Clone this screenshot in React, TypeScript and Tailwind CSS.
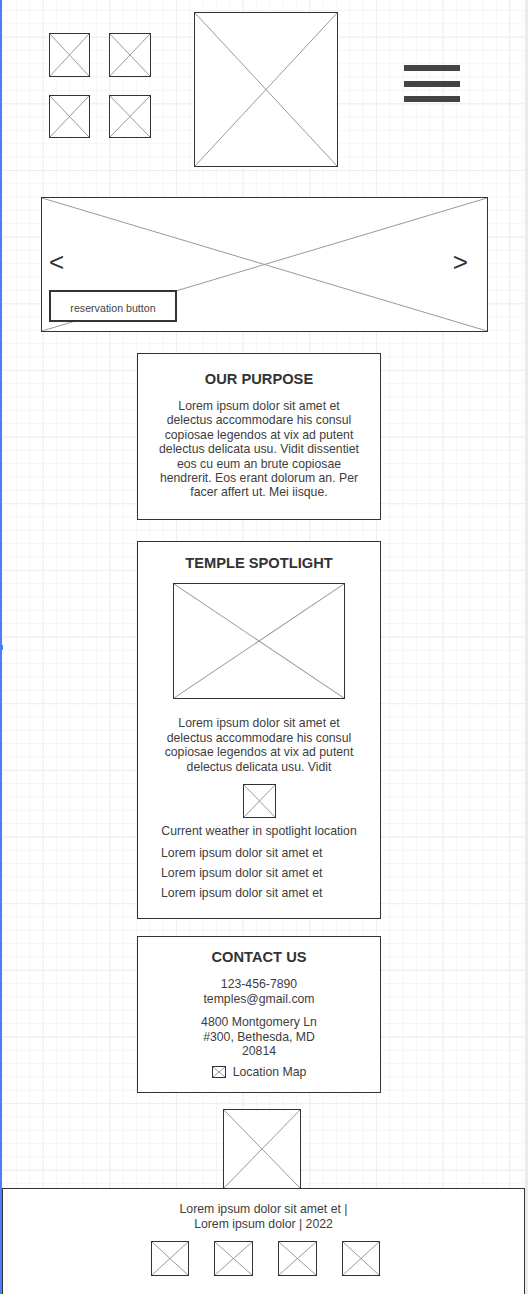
import type { ReactNode } from "react";

// wireframe placeholder: bordered box with a cross
function Placeholder({ className = "", children }: { className?: string; children?: ReactNode }) {
  return (
    <div className={`relative shrink-0 border border-[#333] bg-white ${className}`}>
      <svg
        className="absolute inset-0 h-full w-full"
        viewBox="0 0 100 100"
        preserveAspectRatio="none"
      >
        <line x1="0" y1="0" x2="100" y2="100" stroke="#999" strokeWidth="1" vectorEffect="non-scaling-stroke" />
        <line x1="0" y1="100" x2="100" y2="0" stroke="#999" strokeWidth="1" vectorEffect="non-scaling-stroke" />
      </svg>
      {children}
    </div>
  );
}

const PURPOSE = [
  "Lorem ipsum dolor sit amet et",
  "delectus accommodare his consul",
  "copiosae legendos at vix ad putent",
  "delectus delicata usu. Vidit dissentiet",
  "eos cu eum an brute copiosae",
  "hendrerit. Eos erant dolorum an. Per",
  "facer affert ut. Mei iisque.",
];

const SPOTLIGHT = [
  "Lorem ipsum dolor sit amet et",
  "delectus accommodare his consul",
  "copiosae legendos at vix ad putent",
  "delectus delicata usu. Vidit",
];

export default function App() {
  return (
    <div className="relative h-[1294px] overflow-hidden border-l-2 border-r-[3px] border-l-[#4a80f5] border-r-[#ebebeb] bg-white bg-[linear-gradient(to_right,#eeeeee_1px,transparent_1px),linear-gradient(to_bottom,#eeeeee_1px,transparent_1px),linear-gradient(to_right,#f5f5f5_1px,transparent_1px),linear-gradient(to_bottom,#f5f5f5_1px,transparent_1px)] bg-[size:66.667px_66.667px,66.667px_66.667px,13.333px_13.333px,13.333px_13.333px] bg-[position:40.7px_0,0_36.7px,0.7px_10px,0.7px_10px] font-['Liberation_Sans',Arial,sans-serif] text-[#333]">
      {/* selection handle on the left edge */}
      <div className="absolute left-[-2px] top-[645px] h-[5px] w-[3px] border border-[#4a80f5] bg-white" />

      {/* header */}
      <header className="flex items-start pl-[47px] pt-[12px]">
        <div className="mt-[21px] grid grid-cols-[41px_42px] gap-x-[19px] gap-y-[18px]">
          <Placeholder className="h-[44px] w-[41px]" />
          <Placeholder className="h-[44px] w-[42px]" />
          <Placeholder className="h-[43px] w-[41px]" />
          <Placeholder className="h-[43px] w-[42px]" />
        </div>
        <Placeholder className="ml-[43px] h-[155px] w-[144px]" />
        <div className="ml-[66px] mt-[53px] flex flex-col gap-[9.5px]">
          <span className="h-[6px] w-[56px] bg-[#444]" />
          <span className="h-[6px] w-[56px] bg-[#444]" />
          <span className="h-[6px] w-[56px] bg-[#444]" />
        </div>
      </header>

      {/* carousel */}
      <Placeholder className="ml-[39px] mt-[30px] h-[135px] w-[447px]">
        <span className="absolute left-[7px] top-[49px] text-[26px] leading-[30px] text-[#333]">&lt;</span>
        <span className="absolute right-[19px] top-[49px] text-[26px] leading-[30px] text-[#333]">&gt;</span>
        <button className="absolute left-[7px] top-[92px] flex h-[32px] w-[128px] items-center justify-center border-2 border-[#333] bg-white pt-[3px] text-[10.67px] text-[#444]">
          reservation button
        </button>
      </Placeholder>

      {/* our purpose */}
      <section className="ml-[135px] mt-[21px] flex h-[167px] w-[244px] flex-col items-center border border-[#333] bg-white pt-[17px]">
        <h2 className="text-[14.67px] font-bold leading-[17px]">OUR PURPOSE</h2>
        <p className="mt-[11px] text-center text-[12.25px] leading-[14.4px] text-[#3d3d3d]">
          {PURPOSE.map((l) => (
            <span key={l} className="block">{l}</span>
          ))}
        </p>
      </section>

      {/* temple spotlight */}
      <section className="ml-[135px] mt-[21px] flex h-[378px] w-[244px] flex-col items-center border border-[#333] bg-white pt-[13px]">
        <h2 className="text-[14.67px] font-bold leading-[17px]">TEMPLE SPOTLIGHT</h2>
        <Placeholder className="mt-[11px] h-[116px] w-[172px]" />
        <p className="mt-[17px] text-center text-[12.25px] leading-[14.67px] text-[#3d3d3d]">
          {SPOTLIGHT.map((l) => (
            <span key={l} className="block">{l}</span>
          ))}
        </p>
        <Placeholder className="mt-[9px] h-[34px] w-[33px]" />
        <p className="mt-[6px] text-[12.25px] leading-[14.67px] text-[#3d3d3d]">Current weather in spotlight location</p>
        <ul className="mt-[5px] self-start pl-[23px] text-[12.25px] leading-[20px] text-[#3d3d3d]">
          <li>Lorem ipsum dolor sit amet et</li>
          <li>Lorem ipsum dolor sit amet et</li>
          <li>Lorem ipsum dolor sit amet et</li>
        </ul>
      </section>

      {/* contact */}
      <section className="ml-[135px] mt-[17px] flex h-[157px] w-[244px] flex-col items-center border border-[#333] bg-white pt-[12px] text-center text-[12.25px] text-[#3d3d3d]">
        <h2 className="text-[14.67px] font-bold leading-[17px] text-[#333]">CONTACT US</h2>
        <p className="mt-[11px] leading-[15px]">
          123-456-7890
          <br />
          temples@gmail.com
        </p>
        <p className="mt-[8px] leading-[14.5px]">
          4800 Montgomery Ln
          <br />
          #300, Bethesda, MD
          <br />
          20814
        </p>
        <div className="mt-[6px] flex items-center gap-[7px] leading-[14.67px]">
          <Placeholder className="h-[12px] w-[14px]" />
          <span>Location Map</span>
        </div>
      </section>

      {/* logo */}
      <Placeholder className="ml-[221px] mt-[16px] h-[80px] w-[78px]" />

      {/* footer */}
      <footer className="relative mt-[-1px] h-[120px] border border-[#333] bg-white pt-[13px] text-center text-[12.25px] leading-[15px] text-[#3d3d3d]">
        <p>
          Lorem ipsum dolor sit amet et |
          <br />
          Lorem ipsum dolor | 2022
        </p>
        <div className="mt-[9px] flex justify-center gap-[25px] pl-[4px]">
          <Placeholder className="h-[35px] w-[38px]" />
          <Placeholder className="h-[35px] w-[39px]" />
          <Placeholder className="h-[35px] w-[39px]" />
          <Placeholder className="h-[35px] w-[38px]" />
        </div>
      </footer>
    </div>
  );
}
